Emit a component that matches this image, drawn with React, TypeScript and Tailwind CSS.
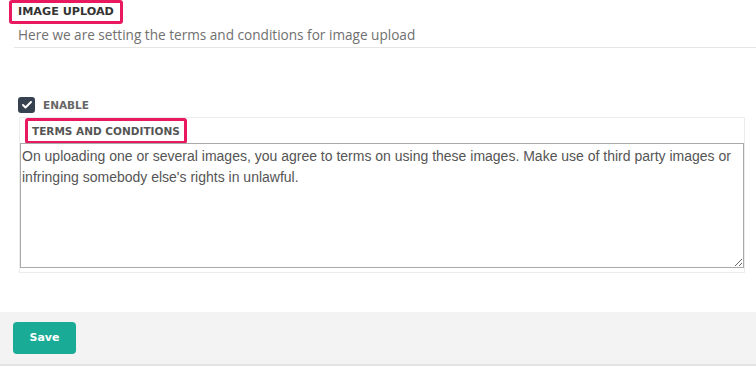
import { Check } from 'lucide-react'

const heading = "font-['DejaVu_Sans',sans-serif] font-bold uppercase"

export default function App() {
  return (
    <div className="w-[756px] h-[366px] bg-white overflow-hidden flex flex-col">
      <div className="flex pl-[9px]">
        <div className="flex items-center h-[24px] px-[6px] border-[3px] border-[#e8195f] rounded-[3px]">
          <span className={`${heading} text-[11.2px] text-[#333] leading-none`}>Image upload</span>
        </div>
      </div>
      <p className="ml-[18px] h-[23px] pt-[1px] font-['Open_Sans',sans-serif] text-[13.6px] leading-[20px] text-[#707070]">
        Here we are setting the terms and conditions for image upload
      </p>
      <div className="ml-[14px] border-b border-[#e6e6e6]" />

      <div className="mt-[49px] ml-[18px] flex items-center gap-[8px] h-[16px]">
        <div className="w-[17px] h-[16px] rounded-[3px] bg-[#364250] flex items-center justify-center">
          <Check className="w-[12px] h-[12px] text-white" strokeWidth={4} />
        </div>
        <span className={`${heading} text-[10.5px] text-[#666] leading-none`}>Enable</span>
      </div>

      <div className="mt-[4px] ml-[19px] w-[726px] h-[156px] border border-[#ececec] flex flex-col">
        <div className="flex ml-[5px]">
          <div className="flex items-center h-[26px] px-[4px] border-[3px] border-[#e8195f] rounded-[3px]">
            <span className={`${heading} text-[10.5px] text-[#555] leading-none`}>Terms and conditions</span>
          </div>
        </div>
        <textarea
          className="-mt-[1px] w-[724px] h-[125px] border border-[#a9a9a9] px-[1px] py-[2px] font-['Liberation_Sans',sans-serif] text-[14px] leading-[21px] text-[#555] outline-none"
          defaultValue="On uploading one or several images, you agree to terms on using these images. Make use of third party images or infringing somebody else's rights in unlawful."
        />
      </div>

      <div className="mt-[39px] flex-1 bg-[#f3f3f3] border-b-2 border-[#e4e4e4] pl-[13px] pt-[10px]">
        <button className="w-[63px] h-[32px] rounded-[4px] bg-[#1aab97] text-white font-['DejaVu_Sans',sans-serif] font-bold text-[11px]">
          Save
        </button>
      </div>
    </div>
  )
}
